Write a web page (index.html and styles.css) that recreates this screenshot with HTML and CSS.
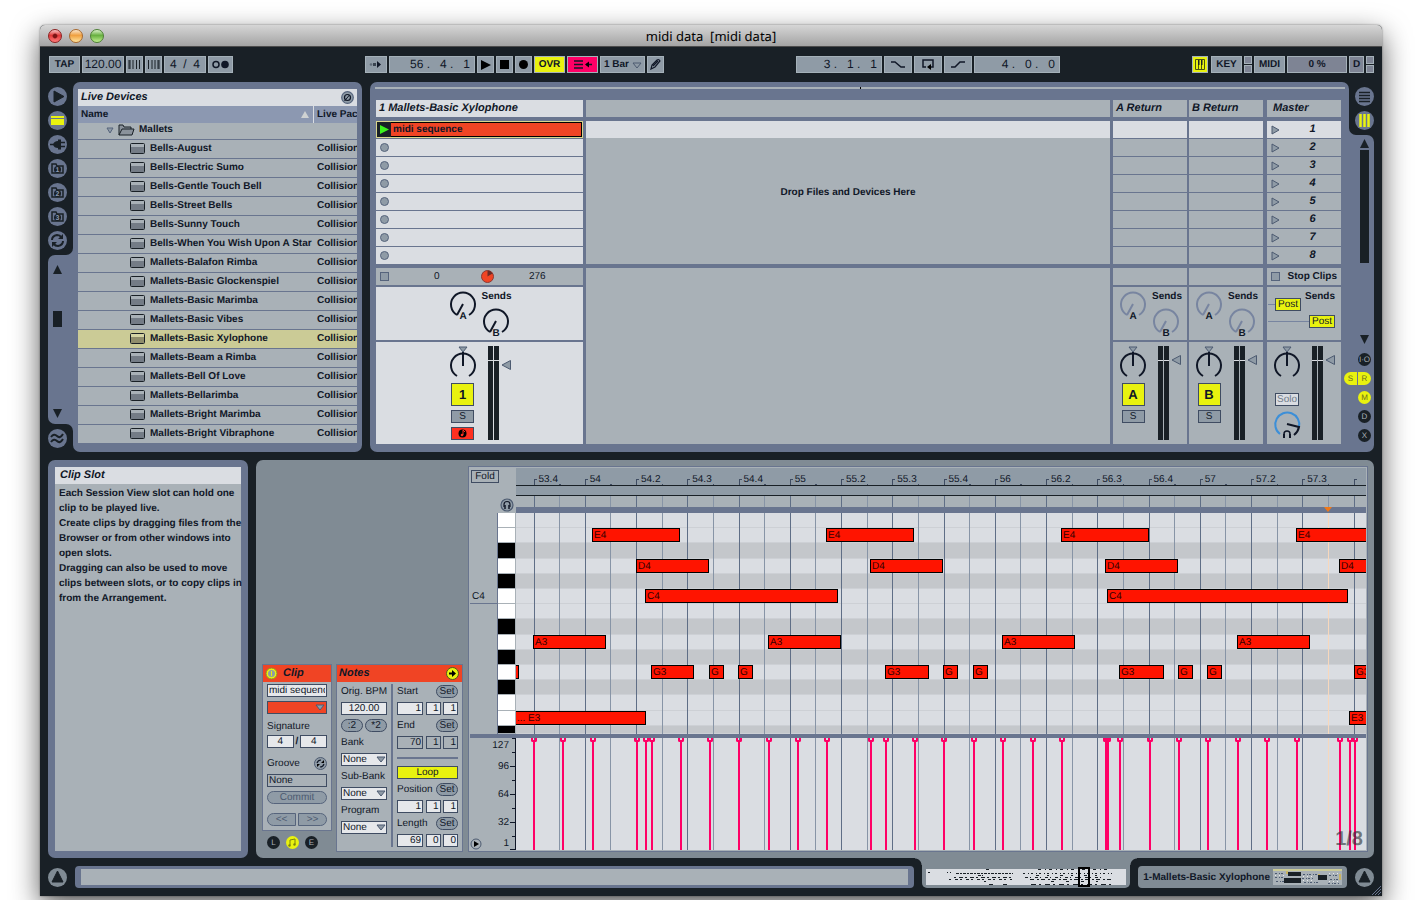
FILE: index.html
```html
<!DOCTYPE html>
<html lang="en">

<head>
    <meta charset="UTF-8" />
    <meta name="viewport" content="width=device-width, initial-scale=1.0" />
    <title>midi data [midi data]</title>
    <link rel="stylesheet" href="styles.css">
</head>

<body>
    <svg class="symbols" aria-hidden="true">
        <symbol id="i-down" viewBox="0 0 10 8"><path d="M1 1h8L5 6z" fill="#8f9ba6" stroke="#4c5a70" /></symbol>
        <symbol id="i-knob" viewBox="0 0 28 28"><path d="M8 25A12 12 0 1 1 20 25" /></symbol>
        <symbol id="i-needle" viewBox="0 0 28 28"><path d="M8 25A12 12 0 1 1 20 25M14 14L8 25" /></symbol>
        <symbol id="i-folder" viewBox="0 0 19 19"><path d="M4 5h4l1 2h6v7H4z" fill="none" stroke="#192026" stroke-width="1.5" /><circle cx="9.5" cy="10.5" r="3.5" fill="#192026" /></symbol>
        <symbol id="i-up" viewBox="0 0 19 19"><path d="M9.5 3L15 14H4z" fill="#192026" stroke="#192026" stroke-linejoin="round" /></symbol>
    </svg>

    <div class="window">
        <header class="titlebar">
            <div class="lights">
                <button class="light red" aria-label="Close"></button>
                <button class="light orange" aria-label="Minimize"></button>
                <button class="light green" aria-label="Zoom"></button>
            </div>
            <h1>midi data&nbsp; [midi data]</h1>
        </header>

        <div class="transport">
            <div class="group">
                <button class="w31">TAP</button>
                <button class="w42 num">120.00</button>
                <button class="w17" aria-label="Nudge down"><svg width="13" height="9"><path d="M1 0v9M2 0v9M5 0v9M8.5 0v9M11.5 0v9" stroke="#192026" /></svg></button>
                <button class="w17" aria-label="Nudge up"><svg width="13" height="9"><path d="M1.5 0v9M5 0v9M8 0v9M11 0v9M12 0v9" stroke="#192026" /></svg></button>
                <button class="w42 num">4 &nbsp;/ &nbsp;4</button>
                <button class="w25" aria-label="Metronome"><svg width="17" height="9"><circle cx="4" cy="4.5" r="3" fill="none" stroke="#101727" stroke-width="1.5" /><circle cx="13" cy="4.5" r="3.8" fill="#101727" /></svg></button>
            </div>
            <div class="group">
                <button class="w22" aria-label="Follow"><svg width="14" height="9"><circle cx="2" cy="4.5" r="1.3" fill="#5f6a77" /><path d="M4 3h3v3H4z" fill="#39434f" /><path d="M8 1l4 3.5L8 8z" fill="#101727" /></svg></button>
                <button class="w86 num right">56 . &nbsp; 4 . &nbsp; 1</button>
                <button class="w17" aria-label="Play"><svg width="11" height="12"><path d="M1 1l10 5L1 11z" /></svg></button>
                <button class="w17" aria-label="Stop"><svg width="9" height="9"><path d="M0 0h9v9H0z" /></svg></button>
                <button class="w17" aria-label="Record"><svg width="9" height="9"><circle cx="4.5" cy="4.5" r="4.5" /></svg></button>
                <button class="w31 yellow">OVR</button>
                <button class="w31 pink" aria-label="Back to arrangement"><svg width="18" height="9"><path d="M0 1h9M0 4.5h9M0 8h9M12 4.5h6" stroke="#101727" stroke-width="1.5" /><path d="M11 4.5l4-3v6z" /></svg></button>
                <button class="w45 left">1 Bar<svg width="10" height="8"><use href="#i-down" /></svg></button>
                <button class="w17" aria-label="Draw mode"><svg width="11" height="11"><path d="M1 10l1-4 5-5q2-1 3 1L5 8zM3 7l5-5" fill="#8f9ba6" stroke="#101727" stroke-width="1.2" /></svg></button>
            </div>
            <div class="group">
                <button class="w86 num right">3 . &nbsp; 1 . &nbsp; 1</button>
                <button class="w28" aria-label="Punch in"><svg width="16" height="8"><path d="M1 1h4l6 5h4" fill="none" stroke="#101727" stroke-width="1.5" /></svg></button>
                <button class="w28" aria-label="Loop switch"><svg width="14" height="11"><path d="M5 8H2V1h10v7H9" fill="none" stroke="#101727" stroke-width="1.5" /><path d="M6 8l4-3v6z" /></svg></button>
                <button class="w28" aria-label="Punch out"><svg width="16" height="8"><path d="M1 6h4l5-5h5" fill="none" stroke="#101727" stroke-width="1.5" /></svg></button>
                <button class="w86 num right">4 . &nbsp; 0 . &nbsp; 0</button>
            </div>
            <div class="group">
                <button class="w16 yellow" aria-label="Computer keyboard"><svg width="10" height="11"><path d="M.5 .5h9v10h-9zM3.5 6v4M6.5 6v4" fill="none" stroke="#4c5310" /><path d="M3 1h1.5v5H3zM6 1h1.5v5H6z" fill="#192026" /></svg></button>
                <button class="w31 key">KEY</button>
                <span class="leds"><i></i><i></i></span>
                <button class="w31">MIDI</button>
                <button class="w60 dim">0 %</button>
                <button class="w15 dim">D</button>
                <span class="leds"><i></i><i></i></span>
            </div>
        </div>

        <div class="upper">
            <section class="browser">
                <nav class="rail">
                    <div class="rail-top">
                        <button class="round" aria-label="Hide browser"><svg viewBox="0 0 19 19"><path d="M6 4l10 5.5L6 15z" fill="#192026" stroke="#192026" stroke-linejoin="round" /></svg></button>
                        <button class="round" aria-label="Live devices"><svg viewBox="0 0 19 19"><path d="M3 5h13v2H3zM3 8h13v6H3z" fill="#e9f20f" /></svg></button>
                        <button class="round" aria-label="Plug-ins"><svg viewBox="0 0 19 19"><path d="M2 9.5h4M13 7.5h4M13 11.5h4" stroke="#192026" stroke-width="1.5" /><path d="M5 9.5Q6 6 10 6V4.5h3v10h-3V13Q6 13 5 9.5z" fill="#192026" /></svg></button>
                        <button class="round" aria-label="File browser 1"><svg viewBox="0 0 19 19"><use href="#i-folder" /><text x="9.5" y="13">1</text></svg></button>
                        <button class="round" aria-label="File browser 2"><svg viewBox="0 0 19 19"><use href="#i-folder" /><text x="9.5" y="13">2</text></svg></button>
                        <button class="round" aria-label="File browser 3"><svg viewBox="0 0 19 19"><use href="#i-folder" /><text x="9.5" y="13">3</text></svg></button>
                        <button class="round" aria-label="Hot-swap"><svg viewBox="0 0 19 19"><path d="M4 9Q4 5 9 4q3 0 4 2M15 10q0 4-5 5-3 0-4-2" fill="none" stroke="#192026" stroke-width="2" /><path d="M15 3v5h-5zM4 16v-5h5z" fill="#192026" /></svg></button>
                    </div>
                    <div class="rail-scroll">
                        <svg width="9" height="9"><path d="M4.5 0L9 9H0z" /></svg>
                        <div class="thumb"></div>
                        <svg width="9" height="9"><path d="M4.5 9L9 0H0z" /></svg>
                    </div>
                    <div class="rail-bottom">
                        <button class="round" aria-label="Groove pool"><svg viewBox="0 0 19 19"><path d="M3 8q3-4 6-1t6-2M3 13q3-4 6-1t6-2" fill="none" stroke="#192026" stroke-width="2" /></svg></button>
                    </div>
                </nav>
                <div class="panel devices">
                    <div class="panel-title">
                        <h2>Live Devices</h2>
                        <button class="search" aria-label="Search"><svg width="13" height="13"><circle cx="6.5" cy="6.5" r="5.8" fill="#8f9ba6" stroke="#56647c" stroke-width="1.2" /><circle cx="6.5" cy="6.5" r="3" fill="none" stroke="#101727" stroke-width="1.2" /><path d="M3.5 10l5-6" stroke="#101727" /></svg></button>
                    </div>
                    <table>
                        <thead>
                            <tr>
                                <th class="name"><span>Name<svg width="8" height="7"><path d="M4 0l4 7H0z" fill="#cfd2d2" /></svg></span></th>
                                <th>Live Pac</th>
                            </tr>
                        </thead>
                        <tbody id="devices"></tbody>
                    </table>
                </div>
            </section>

            <section class="session">
                <div class="panel tracks">
                    <div class="overview"><i></i></div>
                    <div class="columns">
                        <div class="track midi">
                            <h2>1 Mallets-Basic Xylophone</h2>
                            <div class="slots">
                                <button class="slot clip"><span class="launch"><svg width="9" height="9"><path d="M0 0l9 4.5L0 9z" fill="#3cf01e" /></svg></span>midi sequence</button>
                                <button class="slot" aria-label="Stop slot 2"><i></i></button>
                                <button class="slot" aria-label="Stop slot 3"><i></i></button>
                                <button class="slot" aria-label="Stop slot 4"><i></i></button>
                                <button class="slot" aria-label="Stop slot 5"><i></i></button>
                                <button class="slot" aria-label="Stop slot 6"><i></i></button>
                                <button class="slot" aria-label="Stop slot 7"><i></i></button>
                                <button class="slot" aria-label="Stop slot 8"><i></i></button>
                            </div>
                            <div class="stop status">
                                <button class="square" aria-label="Stop clip"></button>
                                <span class="count">0</span>
                                <svg width="13" height="13"><circle cx="6.5" cy="6.5" r="6" fill="#f04424" stroke="#8a3a34" /><path d="M6.5 6.5V.5a6 6 0 0 1 5 3z" fill="#6b2a26" /></svg>
                                <span class="count">276</span>
                            </div>
                            <div class="sends">
                                <div class="strip">
                                    <svg class="knob" width="28" height="34"><use href="#i-needle" width="28" height="28" /><text x="14" y="29">A</text></svg>
                                    <div class="send-b"><b>Sends</b><svg class="knob" width="28" height="34"><use href="#i-needle" width="28" height="28" /><text x="14" y="29">B</text></svg></div>
                                </div>
                            </div>
                            <div class="mixer">
                                <div class="strip">
                                    <div class="buttons">
                                        <svg class="knob pan" width="28" height="34"><path d="M10 1h8l-4 5z" class="mark" /><path d="M14 6v14" /><use href="#i-knob" y="5" width="28" height="28" /></svg>
                                        <button class="activator">1</button>
                                        <button class="small">S</button>
                                        <button class="small arm" aria-label="Arm"><svg width="9" height="9"><circle cx="4.5" cy="4.5" r="4" /><path d="M5 1v5M5 1l2 2" stroke="#ff3020" /><circle cx="4" cy="6" r="1.3" fill="#ff3020" /></svg></button>
                                    </div>
                                    <div class="meter"><i></i><i></i></div>
                                    <svg class="fader low" width="10" height="10"><path d="M9.5 .5v9L1 5z" class="mark" /></svg>
                                </div>
                            </div>
                        </div>

                        <div class="track drop">
                            <h2></h2>
                            <div class="slots">
                                <div class="slot"></div>
                                <p>Drop Files and Devices Here</p>
                            </div>
                            <div class="blank"></div>
                        </div>

                        <div class="returns" id="returns"></div>

                        <div class="track master">
                            <h2>Master</h2>
                            <div class="slots" id="scenes"></div>
                            <div class="stop"><button class="square" aria-label="Stop all"></button><b>Stop Clips</b></div>
                            <div class="sends posts">
                                <b>Sends</b>
                                <div><button class="post">Post</button></div>
                                <div><button class="post">Post</button></div>
                            </div>
                            <div class="mixer">
                                <div class="strip">
                                    <div class="buttons">
                                        <svg class="knob pan" width="28" height="34"><path d="M10 1h8l-4 5z" class="mark" /><path d="M14 6v14" /><use href="#i-knob" y="5" width="28" height="28" /></svg>
                                        <button class="solo">Solo</button>
                                        <svg class="knob" width="28" height="28"><path d="M7 23A12 12 0 1 1 26 16" stroke="#3c8fd8" /><path d="M14 13l12 3q-1 5-5 8" /><path d="M11 25v-2a3 3 0 0 1 6 0v2" stroke-width="1.5" /><path d="M11 23v4M17 23v4" /></svg>
                                    </div>
                                    <div class="meter"><i></i><i></i></div>
                                    <svg class="fader" width="10" height="10"><path d="M9.5 .5v9L1 5z" class="mark" /></svg>
                                </div>
                            </div>
                        </div>
                    </div>
                </div>
                <nav class="rail right">
                    <div class="rail-top">
                        <button class="round" aria-label="Arrangement view"><svg viewBox="0 0 19 19"><path d="M4 5.5h11M4 8.5h11M4 11.5h11M4 14.5h11" stroke="#192026" stroke-width="1.5" /></svg></button>
                        <button class="round" aria-label="Session view"><svg viewBox="0 0 19 19"><path d="M5.5 3v13M9.5 3v13M13.5 3v13" stroke="#e9f20f" stroke-width="2.5" /></svg></button>
                    </div>
                    <div class="rail-scroll">
                        <svg width="9" height="9"><path d="M4.5 0L9 9H0z" /></svg>
                        <div class="bar"></div>
                        <svg width="9" height="9"><path d="M4.5 9L9 0H0z" /></svg>
                        <div class="sections">
                            <button>I·O</button>
                            <div class="pair"><button class="on">S</button><button class="on">R</button></div>
                            <button class="on">M</button>
                            <button>D</button>
                            <button>X</button>
                        </div>
                    </div>
                </nav>
            </section>
        </div>

        <div class="lower">
            <aside class="panel info">
                <div class="panel-title"><h2>Clip Slot</h2></div>
                <div class="help">
                    <p>Each Session View slot can hold one<br>clip to be played live.</p>
                    <p>Create clips by dragging files from the<br>Browser or from other windows into<br>open slots.</p>
                    <p>Dragging can also be used to move<br>clips between slots, or to copy clips in<br>from the Arrangement.</p>
                </div>
            </aside>

            <section class="detail">
                <div class="clip-side">
                    <form class="box clip-box">
                        <div class="box-title"><svg width="13" height="13"><circle cx="6.5" cy="6.5" r="5.5" fill="#e9f20f" stroke="#8a8a30" /><circle cx="6.5" cy="6.5" r="3.5" fill="#8f9ba6" /><path d="M6.5 4v5" stroke="#e9f20f" /></svg><h2>Clip</h2></div>
                        <div class="fields">
                            <input type="text" value="midi sequence" aria-label="Clip name">
                            <button type="button" class="color" aria-label="Clip color"><svg width="10" height="8"><use href="#i-down" /></svg></button>
                            <label class="text" for="sig">Signature</label>
                            <div class="row"><input class="mid" type="text" id="sig" value="4"><b>/</b><input class="mid" type="text" value="4" aria-label="Denominator"></div>
                            <div class="row groove"><label for="groove">Groove</label><svg width="13" height="13"><circle cx="6.5" cy="6.5" r="6" fill="#8f9ba6" stroke="#4c5a70" /><path d="M3 6q1-3 4-3M10 7q-1 3-4 3" fill="none" stroke="#101727" stroke-width="1.2" /><path d="M10 3v3H7zM3 10V7h3z" /></svg></div>
                            <input class="gray" type="text" id="groove" value="None">
                            <button type="button" class="pill faint">Commit</button>
                            <div class="row nudge"><button type="button" class="pill faint">&lt;&lt;</button><button type="button" class="pill faint">&gt;&gt;</button></div>
                        </div>
                    </form>
                    <div class="tabs">
                        <button>L</button>
                        <button class="on" aria-label="Notes box"><svg width="9" height="9"><path d="M2 7V2l5-1v5" fill="none" stroke="#7c8210" /><circle cx="1.5" cy="7.5" r="1.2" fill="#7c8210" /><circle cx="6.5" cy="6.5" r="1.2" fill="#7c8210" /></svg></button>
                        <button>E</button>
                    </div>
                </div>

                <form class="box notes-box">
                    <div class="box-title"><h2>Notes</h2><svg width="13" height="13"><circle cx="6.5" cy="6.5" r="6" fill="#e9f20f" stroke="#4c5a20" /><path d="M3 5.5h3V3l4 3.5L6 10V7.5H3z" /></svg></div>
                    <div class="notes-cols">
                        <div class="fields">
                            <label for="bpm">Orig. BPM</label>
                            <input class="mid" type="text" id="bpm" value="120.00">
                            <div class="row"><button type="button" class="pill">:2</button><button type="button" class="pill">*2</button></div>
                            <label for="bank">Bank</label>
                            <div class="pick"><select id="bank"><option>None</option></select><svg width="10" height="8"><use href="#i-down" /></svg></div>
                            <label for="subbank">Sub-Bank</label>
                            <div class="pick"><select id="subbank"><option>None</option></select><svg width="10" height="8"><use href="#i-down" /></svg></div>
                            <label for="program">Program</label>
                            <div class="pick"><select id="program"><option>None</option></select><svg width="10" height="8"><use href="#i-down" /></svg></div>
                        </div>
                        <div class="fields">
                            <div class="row"><label for="start">Start</label><button type="button" class="pill set">Set</button></div>
                            <div class="row pos"><input type="text" id="start" value="1"><input type="text" value="1" aria-label="Start beat"><input type="text" value="1" aria-label="Start sixteenth"></div>
                            <div class="row"><label for="end">End</label><button type="button" class="pill set">Set</button></div>
                            <div class="row pos"><input class="gray" type="text" id="end" value="70"><input class="gray" type="text" value="1" aria-label="End beat"><input class="gray" type="text" value="1" aria-label="End sixteenth"></div>
                            <hr>
                            <button type="button" class="loop">Loop</button>
                            <div class="row"><label for="position">Position</label><button type="button" class="pill set">Set</button></div>
                            <div class="row pos"><input type="text" id="position" value="1"><input type="text" value="1" aria-label="Position beat"><input type="text" value="1" aria-label="Position sixteenth"></div>
                            <div class="row"><label for="length">Length</label><button type="button" class="pill set">Set</button></div>
                            <div class="row pos"><input type="text" id="length" value="69"><input type="text" value="0" aria-label="Length beats"><input type="text" value="0" aria-label="Length sixteenths"></div>
                        </div>
                    </div>
                </form>

                <div class="editor">
                    <div class="corner">
                        <button class="fold">Fold</button>
                        <svg width="14" height="14"><circle cx="7" cy="7" r="6" fill="#8f9ba6" stroke="#4c5a70" stroke-width="1.2" /><path d="M4 9V6.5a3 3 0 0 1 6 0V9" fill="none" stroke="#101727" stroke-width="1.2" /><path d="M5 7v4M9 7v4" stroke="#101727" stroke-width="1.5" /></svg>
                    </div>
                    <div class="rulers">
                        <div class="ruler" id="ruler"></div>
                        <div class="loop-lane"></div>
                        <div class="scrub grid-area"></div>
                        <div class="strip-bar"><svg class="playmark" width="8" height="5"><path d="M0 0h8L4 5z" fill="#f07818" /></svg></div>
                    </div>
                    <div class="octaves">
                        <span class="octave">C4</span>
                        <div class="keys" id="keys"></div>
                    </div>
                    <div class="roll grid-area" id="roll"></div>
                    <div class="divider"></div>
                    <div class="scale">
                        <button class="preview" aria-label="Show velocity lane"><svg width="12" height="12"><circle cx="6" cy="6" r="5" fill="none" stroke="#4c5a70" /><path d="M4 3l5 3-5 3z" /></svg></button>
                        <div class="levels"><span>127</span><span>96</span><span>64</span><span>32</span><span>1</span></div>
                    </div>
                    <div class="velocity grid-area" id="velocity"><span class="quantize">1/8</span></div>
                </div>
            </section>
        </div>

        <footer>
            <button class="round gray" aria-label="Hide info view"><svg viewBox="0 0 19 19"><use href="#i-up" /></svg></button>
            <div class="message"></div>
            <div class="clip-tab">
                <svg viewBox="0 0 200 16" preserveAspectRatio="none" id="mini"></svg>
                <i></i>
            </div>
            <div class="device-tab">
                <b>1-Mallets-Basic Xylophone</b>
                <svg width="69" height="16" id="chain"></svg>
            </div>
            <button class="round gray" aria-label="Hide detail view"><svg viewBox="0 0 19 19"><use href="#i-up" /></svg></button>
            <svg class="grip" width="9" height="9"><path d="M0 9l9-9M3 9l6-6M6 9l3-3" stroke="#69758f" /></svg>
        </footer>
    </div>

    <script src="script.js"></script>
</body>

</html>
```

FILE: styles.css
```css
body {
    margin: 0;
    padding: 25px 40px 4px;
    min-height: 100vh;
    box-sizing: border-box;
    display: flex;
    background: #fff;
    font: 10px/13px "Liberation Sans", Arial, sans-serif;
    color: #101727;
    text-rendering: geometricPrecision;
    overflow: hidden;
}

h1,
h2,
p {
    margin: 0;
}

h2 {
    font: italic bold 11px/17px "Liberation Sans", Arial, sans-serif;
    white-space: nowrap;
}

button,
input,
select {
    box-sizing: border-box;
    margin: 0;
    padding: 0;
    border: 0;
    border-radius: 0;
    background: none;
    font: inherit;
    color: inherit;
    text-rendering: inherit;
}

svg {
    display: block;
    flex: none;
}

.symbols {
    position: absolute;
    width: 0;
    height: 0;
}

.window {
    flex: 1;
    min-width: 0;
    display: flex;
    flex-direction: column;
    background: #192026;
    border-radius: 5px 5px 0 0;
    box-shadow: 0 10px 28px rgba(0, 0, 0, 0.65), 0 0 2px rgba(0, 0, 0, 0.5);
}

/* title bar */
.titlebar {
    display: grid;
    grid-template-columns: 1fr auto 1fr;
    align-items: center;
    height: 21px;
    border-bottom: 1px solid #4c4c4c;
    border-radius: 5px 5px 0 0;
    background: linear-gradient(#d6d6d6, #a4a4a4);
}

.titlebar h1 {
    font: 13px/20px "Noto Sans", sans-serif;
    color: #000;
}

.lights {
    display: flex;
    gap: 7px;
    padding-left: 8px;
}

.light {
    width: 14px;
    height: 14px;
    border-radius: 50%;
    border: 1px solid #7a6a5a;
}

.light.red {
    border-color: #8c2020;
    background: radial-gradient(circle at 50% 50%, #7c1414 20%, transparent 35%), linear-gradient(#f6c4c4, #e03838 45%, #ff7c7c);
}

.light.orange {
    border-color: #a8682c;
    background: linear-gradient(#fbe6cc, #f0a040 45%, #ffe49c);
}

.light.green {
    border-color: #4c8034;
    background: linear-gradient(#dcf2cc, #68b040 45%, #c0f090);
}

/* transport */
.transport {
    display: flex;
    justify-content: space-between;
    padding: 9px 8px 9px 9px;
}

.group {
    display: flex;
    gap: 2px;
}

.group button {
    height: 17px;
    display: flex;
    align-items: center;
    justify-content: center;
    border: 1px solid #a5b1b9;
    background: #8f9ba6;
    font-weight: bold;
    white-space: nowrap;
}

.group .num {
    font-size: 12px;
    font-weight: normal;
}

.group .right {
    justify-content: flex-end;
    padding-right: 4px;
}

.group .left {
    justify-content: space-between;
    padding: 0 2px 0 3px;
}

.group .left svg {
    margin-top: 3px;
}

.group .yellow {
    background: #e9f20f;
}

.group .pink {
    background: #ff0066;
}

.group .dim {
    background: #7e8494;
}

.group .key {
    margin-left: 1px;
}

.w15 { width: 15px; }
.w16 { width: 16px; }
.w17 { width: 17px; }
.w22 { width: 22px; }
.w25 { width: 25px; }
.w28 { width: 28px; }
.w31 { width: 31px; }
.w42 { width: 42px; }
.w45 { width: 45px; }
.w60 { width: 60px; }
.w86 { width: 86px; }

.leds {
    display: flex;
    flex-direction: column;
    gap: 1px;
}

.leds i {
    flex: 1;
    width: 6px;
    border: 1px solid #a5b1b9;
    background: #7e8494;
}

/* upper half */
.upper {
    display: flex;
    gap: 8px;
    padding: 0 8px;
}

.browser,
.session {
    display: flex;
}

.session {
    flex: 1;
    min-width: 0;
}

.panel {
    background: #69758f;
    border-radius: 7px;
}

.rail {
    width: 25px;
    display: flex;
    flex-direction: column;
    background: linear-gradient(to right, #192026 50%, #69758f 50%);
}

.rail.right {
    background: linear-gradient(to left, #192026 50%, #69758f 50%);
}

.rail-top,
.rail-bottom {
    display: flex;
    flex-direction: column;
    gap: 5px;
    padding: 5px 0;
    background: #192026;
}

.rail-top {
    border-radius: 0 0 7px 0;
}

.rail-bottom {
    border-radius: 0 7px 0 0;
    padding-bottom: 4px;
}

.rail.right .rail-top {
    align-items: flex-end;
    border-radius: 0 0 0 7px;
}

.round {
    width: 19px;
    height: 19px;
    border-radius: 50%;
    background: #69758f;
}

.round.gray {
    background: #808b94;
}

.round text {
    font: bold 7px "Liberation Sans", sans-serif;
    fill: #8c98b1;
    text-anchor: middle;
}

.rail-scroll {
    flex: 1;
    box-sizing: border-box;
    display: flex;
    flex-direction: column;
    justify-content: space-between;
    padding: 10px 4px 6px 5px;
    border-radius: 7px 0 0 7px;
    background: #69758f;
    fill: #192026;
}

.thumb {
    width: 9px;
    height: 16px;
    margin-bottom: 46px;
    background: #192026;
}

.rail.right .rail-scroll {
    justify-content: flex-start;
    align-items: flex-end;
    padding: 4px 5px 10px 0;
    border-radius: 0 7px 7px 0;
}

.rail.right .bar {
    width: 9px;
    height: 113px;
    margin: 2px 0 72px;
    background: #192026;
}

.sections {
    display: flex;
    flex-direction: column;
    align-items: flex-end;
    gap: 6px;
    margin: 9px -2px 0 -8px;
}

.sections button,
.tabs button {
    width: 13px;
    height: 13px;
    display: flex;
    align-items: center;
    justify-content: center;
    border-radius: 50%;
    background: #192026;
    color: #a9b1b7;
    font-size: 8px;
    line-height: 13px;
}

.sections button.on,
.tabs button.on {
    background: #e9f20f;
    color: #6b7020;
}

.pair {
    display: flex;
    gap: 1px;
}

.pair .on:first-child {
    border-radius: 7px 0 0 7px;
}

.pair .on:last-child {
    border-radius: 0 7px 7px 0;
}

/* device browser */
.devices {
    width: 279px;
    padding: 7px 5px 8px;
}

.panel-title {
    display: flex;
    align-items: center;
    justify-content: space-between;
    height: 17px;
    padding: 0 3px;
    background: #dadde2;
}

table {
    width: 100%;
    table-layout: fixed;
    border-spacing: 0;
    background: #a9b1b7;
    font-weight: bold;
}

th,
td {
    height: 18px;
    padding: 0;
    border-bottom: 1px solid #69758f;
    overflow: hidden;
    text-align: left;
    white-space: nowrap;
}

td {
    padding-left: 3px;
    line-height: 12px;
}

th {
    height: 17px;
    padding-left: 3px;
    border: 0;
    background: #8c98b1;
}

th.name {
    width: 232px;
    border-right: 1px solid #dadde2;
}

th span {
    display: flex;
    align-items: center;
    justify-content: space-between;
    padding-right: 4px;
}

td:first-child {
    padding-left: 52px;
}

td span {
    display: flex;
    align-items: center;
    gap: 5px;
}

tr.folder td {
    height: 16px;
    padding: 0;
}

tr.folder span {
    gap: 4px;
    height: 14px;
    padding: 0 0 2px 28px;
}

tr.selected td {
    background: #cbcb96;
}

/* session view */
.tracks {
    flex: 1;
    min-width: 0;
    padding: 5px 8px 8px 6px;
    border-radius: 7px 7px 0 7px;
}

.overview {
    height: 2px;
    margin: 0 -4px 11px -1px;
    background: #a9b1b7;
}

.overview i {
    display: block;
    width: 1px;
    height: 2px;
    margin-left: 50%;
    background: #000;
}

.columns {
    display: flex;
    gap: 3px;
}

.track {
    width: 74px;
    display: flex;
    flex-direction: column;
}

.track.midi {
    width: 207px;
}

.track.drop {
    flex: 1;
}

.returns {
    display: flex;
    gap: 2px;
    padding-right: 1px;
}

.track h2 {
    height: 17px;
    padding-left: 3px;
    background: #a9b1b7;
}

.master h2 {
    padding-left: 6px;
}

.slots {
    display: flex;
    flex-direction: column;
    gap: 1px;
    height: 143px;
    margin: 4px 0;
}

.slot {
    height: 17px;
    display: flex;
    align-items: center;
    padding-left: 4px;
    background: #a9b1b7;
}

.slot:first-child {
    background: #dadde2;
}

.slot i {
    width: 7px;
    height: 7px;
    border: 1px solid #56647c;
    border-radius: 50%;
    background: #8f9ba6;
}

.midi h2,
.midi .slot,
.midi .sends,
.midi .mixer {
    background: #dadde2;
}

.midi .slot.clip {
    padding: 0;
    border: 1px solid #000;
    outline: 1px solid #d8d48c;
    outline-offset: -1px;
    background: #f04424;
    font-weight: bold;
    box-shadow: inset 0 0 0 1px #000;
    gap: 2px;
}

.launch {
    align-self: stretch;
    width: 14px;
    display: flex;
    align-items: center;
    justify-content: center;
    background: #192026;
}

.drop .slots {
    gap: 0;
}

.drop p {
    flex: 1;
    display: flex;
    justify-content: center;
    padding-top: 48px;
    background: #a9b1b7;
    font-weight: bold;
}

.blank {
    flex: 1;
    background: #a9b1b7;
}

.scene {
    font: italic bold 11px/17px "Liberation Sans", Arial, sans-serif;
}

.scene span {
    flex: 1;
    padding-left: 4px;
    text-align: center;
}

.stop {
    display: flex;
    align-items: center;
    height: 17px;
    padding: 0 4px;
    background: #a9b1b7;
}

.stop b {
    margin-left: 8px;
    white-space: nowrap;
}

.square {
    width: 9px;
    height: 9px;
    border: 1px solid #56647c;
    background: #8f9ba6;
}

.count {
    flex: 1;
    text-align: center;
}

.status .square {
    margin-right: 4px;
}

.status {
    padding-right: 2px;
}

.sends,
.mixer {
    display: flex;
    justify-content: center;
    background: #a9b1b7;
}

.sends {
    height: 53px;
    margin: 2px 0;
}

.mixer {
    height: 102px;
}

.strip {
    width: 74px;
    display: flex;
    box-sizing: border-box;
}

.sends .strip {
    gap: 5px;
    padding: 3px 0 0 6px;
}

.send-b b {
    display: block;
    height: 17px;
}

.knob {
    overflow: visible;
    fill: none;
    stroke: #101727;
    stroke-width: 2;
}

.knob.off {
    stroke: #7885a0;
}

.knob text {
    font: bold 10px "Liberation Sans", sans-serif;
    fill: #101727;
    stroke: none;
    text-anchor: middle;
}

.mark {
    fill: #8f9ba6;
    stroke: #4c5a70;
    stroke-width: 1;
}

.mixer .strip {
    padding: 4px 0 0 6px;
}

.buttons {
    width: 28px;
    display: flex;
    flex-direction: column;
    align-items: center;
    gap: 4px;
}

.buttons .pan {
    margin-bottom: -1px;
}

.activator,
.small,
.solo,
.post {
    width: 23px;
    border: 1px solid #3f4c62;
    background: #e9f20f;
}

.activator {
    height: 23px;
    font-size: 13px;
    font-weight: bold;
}

.small,
.solo {
    height: 13px;
    line-height: 11px;
    background: #8f9ba6;
}

.small.arm {
    display: flex;
    align-items: center;
    justify-content: center;
    background: #ff3020;
}

.solo {
    width: 24px;
    margin: 10px 0 1px;
    background: #dadde2;
    color: #6f7a88;
}

.meter {
    display: flex;
    gap: 1px;
    height: 94px;
    margin: 0 2px 0 11px;
}

.meter i {
    width: 5px;
    background: linear-gradient(#192026 14px, #dadde2 14px, #dadde2 15px, #192026 15px);
}

.fader {
    margin-top: 9px;
}

.fader.low {
    margin-top: 14px;
}

.posts {
    flex-direction: column;
    justify-content: flex-start;
    box-sizing: border-box;
    padding: 3px 6px 0 1px;
}

.posts b {
    height: 8px;
    text-align: right;
}

.posts div {
    height: 13px;
    display: flex;
    margin-bottom: 4px;
    background: linear-gradient(#7885a0, #7885a0) 0 6px / 100% 1px no-repeat;
}

.posts div:nth-child(2) {
    width: 33px;
}

.post {
    width: 26px;
    height: 13px;
    margin-left: auto;
    line-height: 11px;
}

/* lower half */
.lower {
    flex: 1;
    display: flex;
    gap: 8px;
    padding: 8px 8px 0;
}

.info {
    width: 186px;
    display: flex;
    flex-direction: column;
    padding: 7px;
}

.info .panel-title {
    padding: 0 5px;
}

.help {
    flex: 1;
    padding: 2px 0 0 4px;
    background: #a9b1b7;
    font-weight: bold;
    line-height: 15px;
    white-space: nowrap;
}

.detail {
    flex: 1;
    min-width: 0;
    display: flex;
    align-items: flex-end;
    box-sizing: border-box;
    padding: 6px;
    border-radius: 7px;
    background: #808b94;
}

.box {
    box-sizing: border-box;
    border: 1px solid #69758f;
    background: #a9b1b7;
}

.box-title {
    display: flex;
    align-items: center;
    gap: 5px;
    height: 17px;
    padding: 0 3px 0 2px;
    background: #f04424;
}

.clip-side {
    width: 70px;
    margin-right: 4px;
}

.clip-box {
    height: 167px;
}

.fields {
    display: flex;
    flex-direction: column;
    gap: 4px;
    white-space: nowrap;
}

.fields input,
.fields select,
.color,
.loop {
    width: 100%;
    height: 13px;
    min-width: 0;
    padding: 0 1px;
    border: 1px solid #3f4c62;
    background: #e6e8eb;
    line-height: 11px;
}

.fields label {
    height: 13px;
}

.fields input.gray {
    background: #a9b1b7;
}

.fields input.mid {
    text-align: center;
}

.clip-box .fields {
    padding: 2px 4px 0;
}

.fields .color {
    display: flex;
    align-items: center;
    justify-content: flex-end;
    background: #f04424;
}

.fields label.text {
    box-sizing: border-box;
    padding-top: 2px;
}

.row {
    display: flex;
    justify-content: space-between;
    gap: 2px;
}

.groove {
    align-items: center;
    padding: 5px 0 0;
}

.nudge {
    margin-top: 5px;
}

.pill {
    width: 100%;
    height: 13px;
    border: 1px solid #3f4c62;
    border-radius: 7px;
    background: #8f9ba6;
    line-height: 11px;
}

.pill.faint {
    border-color: #56647c;
    color: #4c5a70;
}

.pill.set {
    width: 22px;
}

.nudge .pill:first-child {
    border-radius: 7px 0 0 7px;
}

.nudge .pill:last-child {
    border-radius: 0 7px 7px 0;
}

.tabs {
    display: flex;
    gap: 6px;
    padding: 5px 5px 3px;
}

.notes-box {
    width: 127px;
    height: 188px;
    margin-right: 5px;
}

.notes-box .box-title {
    justify-content: space-between;
}

.notes-cols {
    display: grid;
    grid-template-columns: 46px 61px;
    gap: 10px;
    padding: 3px 4px 0;
    background: linear-gradient(#69758f, #69758f) 54px 2px / 2px 163px no-repeat;
}

.pick {
    display: grid;
    align-items: center;
}

.pick > * {
    grid-area: 1 / 1;
}

.pick select {
    appearance: none;
}

.pick svg {
    justify-self: end;
    margin-right: 1px;
    pointer-events: none;
}

.pos input {
    width: 15px;
    text-align: right;
}

.pos input:first-child {
    width: 26px;
}

hr {
    width: 100%;
    height: 2px;
    margin: 4px 0 3px;
    border: 0;
    background: #69758f;
}

.fields .loop {
    background: #e9f20f;
}

/* piano roll */
.editor {
    flex: 1;
    min-width: 0;
    align-self: stretch;
    display: grid;
    grid-template: 45px 1fr 4px 112px / 46px minmax(0, 1fr);
    box-sizing: border-box;
    padding: 1px;
    border: 1px solid #69758f;
    background: #a9b1b7;
}

.corner {
    display: flex;
    flex-direction: column;
    justify-content: space-between;
    padding: 2px 2px 1px 1px;
}

.corner svg {
    align-self: flex-end;
}

.fold {
    width: 28px;
    height: 13px;
    border: 1px solid #3f4c62;
    line-height: 11px;
}

.rulers {
    display: flex;
    flex-direction: column;
}

.ruler {
    position: relative;
    height: 17px;
    border-bottom: 1px solid #192026;
    background: #8f9ba6;
    overflow: hidden;
}

.ruler span {
    position: absolute;
    bottom: 0;
    height: 6px;
    padding-left: 4px;
    border-left: 1px solid #3f4c62;
    line-height: 1px;
    background: linear-gradient(#3f4c62, #3f4c62) 0 0 / 2px 1px no-repeat;
}

.ruler span.half {
    height: 1px;
    padding: 0;
}

.loop-lane {
    height: 9px;
    border-bottom: 1px solid #192026;
    background: #8f9ba6;
}

.scrub {
    height: 11px;
}

.strip-bar {
    position: relative;
    flex: 1;
    background: #69758f;
}

.playmark {
    position: absolute;
    left: 95.5%;
    margin-left: -4px;
}

.grid-area {
    position: relative;
    overflow: hidden;
}

.line {
    position: absolute;
    z-index: 1;
    top: 0;
    bottom: 0;
    width: 1px;
    background: #5f6e86;
}

.line.half {
    background: #8794a6;
}

.line.play {
    background: #f8d8bc;
}

.octaves {
    display: grid;
    grid-template-columns: 27px 18px;
}

.octave {
    height: 91px;
    display: flex;
    align-items: flex-end;
    padding-left: 2px;
    border-bottom: 1px solid #69758f;
    box-sizing: border-box;
    line-height: 12px;
}

.keys {
    display: flex;
    flex-direction: column;
    border-left: 1px solid #69758f;
}

.keys i {
    flex: 2;
    box-sizing: border-box;
    border-bottom: 1px solid #a9b1b7;
    background: #fff;
}

.keys i.sharp {
    background: #000;
}

.keys i:last-child,
.roll .lane:last-child {
    flex: 1;
}

.roll {
    display: flex;
    flex-direction: column;
    background: #dadde2;
}

.lane {
    position: relative;
    flex: 2;
    box-sizing: border-box;
    border-bottom: 1px solid #cdd0d5;
}

.lane.sharp {
    background: #c4c7cb;
}

.note {
    position: absolute;
    z-index: 2;
    top: 0;
    height: 14px;
    box-sizing: border-box;
    padding-left: 1px;
    border: 1px solid #000;
    background: #ff1400;
    color: #300;
    line-height: 13px;
    white-space: nowrap;
    overflow: hidden;
}

.divider {
    grid-column: 1 / 3;
    background: #69758f;
}

.scale {
    display: flex;
    justify-content: space-between;
    align-items: flex-end;
}

.levels {
    align-self: stretch;
    display: grid;
    grid-template-rows: 1fr 2fr 2fr 2fr 1fr;
    align-items: center;
    padding-right: 6px;
    border-right: 1px solid #101727;
    text-align: right;
    background: linear-gradient(#101727, #101727) 100% 0 / 3px 1px no-repeat,
        linear-gradient(#101727, #101727) 100% 14px / 3px 1px no-repeat,
        linear-gradient(#101727, #101727) 100% 28px / 5px 1px no-repeat,
        linear-gradient(#101727, #101727) 100% 42px / 3px 1px no-repeat,
        linear-gradient(#101727, #101727) 100% 56px / 5px 1px no-repeat,
        linear-gradient(#101727, #101727) 100% 70px / 3px 1px no-repeat,
        linear-gradient(#101727, #101727) 100% 84px / 5px 1px no-repeat,
        linear-gradient(#101727, #101727) 100% 98px / 3px 1px no-repeat,
        linear-gradient(#101727, #101727) 100% 111px / 5px 1px no-repeat;
}

.velocity {
    background: #dadde2;
}

.stem {
    position: absolute;
    z-index: 2;
    top: 3px;
    bottom: 0;
    width: 2px;
    background: #ff0066;
}

.stem::before {
    content: "";
    position: absolute;
    top: -3px;
    left: -2px;
    width: 2px;
    height: 2px;
    border: 2px solid #ff0066;
    border-top: 0;
    border-radius: 0 0 2px 2px;
}

.quantize {
    position: absolute;
    z-index: 2;
    right: 3px;
    bottom: 0;
    font-size: 20px;
    font-weight: bold;
    line-height: 22px;
    color: rgba(40, 46, 52, 0.6);
}

/* bottom bar */
footer {
    position: relative;
    display: flex;
    align-items: center;
    gap: 8px;
    height: 38px;
    padding: 0 8px;
}

.message {
    flex: 1;
    height: 16px;
    border: solid #69758f;
    border-width: 3px 6px;
    border-radius: 4px;
    background: #a9b1b7;
}

.clip-tab {
    position: relative;
    align-self: flex-start;
    width: 200px;
    padding: 11px 4px 3px;
    border-radius: 0 0 5px 5px;
    background: #808b94;
}

/* inverted corners where the tab meets the clip view */
.clip-tab::before,
.clip-tab::after {
    content: "";
    position: absolute;
    top: 0;
    width: 7px;
    height: 7px;
}

.clip-tab::before {
    right: 100%;
    background: radial-gradient(circle at 0 100%, #192026 6px, #808b94 7px);
}

.clip-tab::after {
    left: 100%;
    background: radial-gradient(circle at 100% 100%, #192026 6px, #808b94 7px);
}

.clip-tab svg {
    width: 100%;
    height: 16px;
    background: #dadde2;
}

.clip-tab i {
    position: absolute;
    left: 75%;
    top: 9px;
    width: 8px;
    height: 16px;
    border: 2px solid #000;
}

.device-tab {
    display: flex;
    align-items: center;
    gap: 3px;
    height: 22px;
    padding: 0 5px;
    border-radius: 4px;
    background: #808b94;
    white-space: nowrap;
}

.grip {
    position: absolute;
    right: 1px;
    bottom: 1px;
}
```

FILE: script.js
```js
const devices = [
    'Bells-August', 'Bells-Electric Sumo', 'Bells-Gentle Touch Bell', 'Bells-Street Bells',
    'Bells-Sunny Touch', 'Bells-When You Wish Upon A Star', 'Mallets-Balafon Rimba',
    'Mallets-Basic Glockenspiel', 'Mallets-Basic Marimba', 'Mallets-Basic Vibes',
    'Mallets-Basic Xylophone', 'Mallets-Beam a Rimba', 'Mallets-Bell Of Love',
    'Mallets-Bellarimba', 'Mallets-Bright Marimba', 'Mallets-Bright Vibraphone'
];

const folderRow = `<tr class="folder"><td colspan="2"><span>
    <svg width="8" height="7"><path d="M1 1h6L4 6z" fill="#8f9ba6" stroke="#56647c"/></svg>
    <svg width="17" height="12"><path d="M1 11V1h4l1 2h7v2M1 11L4 5h12l-2 6z" fill="#8a929b" stroke="#192026"/></svg>
    Mallets</span></td></tr>`;

document.getElementById('devices').innerHTML = folderRow + devices.map(name => {
    const selected = name === 'Mallets-Basic Xylophone';
    return `<tr class="${selected ? 'selected' : ''}"><td><span>
        <svg width="15" height="12"><rect x=".5" y=".5" width="14" height="10" rx="1" fill="${selected ? '#d4d4a4' : '#a9b1b7'}" stroke="#192026"/>
        <path d="M1 4h13v6H1z" fill="${selected ? '#8f8d6c' : '#747c86'}"/></svg>
        ${name}</span></td><td>Collision</td></tr>`;
}).join('');

let scenes = '';
for (let i = 1; i <= 8; i++) {
    scenes += `<button class="slot scene"><svg width="9" height="10"><path d="M1 1l7 4-7 4z" class="mark"/></svg><span>${i}</span></button>`;
}
document.getElementById('scenes').innerHTML = scenes;

// return tracks
const sendKnob = letter => `<svg class="knob off" width="28" height="34"><use href="#i-needle" width="28" height="28"/><text x="14" y="29">${letter}</text></svg>`;

document.getElementById('returns').innerHTML = ['A', 'B'].map(letter => `
    <div class="track">
        <h2>${letter} Return</h2>
        <div class="slots">${'<div class="slot"></div>'.repeat(8)}</div>
        <div class="stop"></div>
        <div class="sends"><div class="strip">${sendKnob('A')}<div class="send-b"><b>Sends</b>${sendKnob('B')}</div></div></div>
        <div class="mixer">
            <div class="strip">
                <div class="buttons">
                    <svg class="knob pan" width="28" height="34"><path d="M10 1h8l-4 5z" class="mark"/><path d="M14 6v14"/><use href="#i-knob" y="5" width="28" height="28"/></svg>
                    <button class="activator">${letter}</button>
                    <button class="small">S</button>
                </div>
                <div class="meter"><i></i><i></i></div>
                <svg class="fader" width="10" height="10"><path d="M9.5 .5v9L1 5z" class="mark"/></svg>
            </div>
        </div>
    </div>`).join('');

// time axis: the visible part of the clip is 850 units wide, one 16th is 51.25
const WIDTH = 850;
const STEP = 51.25;
const FIRST = 17.5;
const pct = value => (value / WIDTH * 100) + '%';

const labels = ['53.4', '54', '54.2', '54.3', '54.4', '55', '55.2', '55.3', '55.4',
    '56', '56.2', '56.3', '56.4', '57', '57.2', '57.3', ''];

let ruler = '';
let lines = '';
labels.forEach((label, i) => {
    const x = FIRST + i * STEP;
    ruler += `<span style="left:${pct(x)}">${label}</span>`;
    lines += `<div class="line" style="left:${pct(x)}"></div>`;
    if (i < labels.length - 1) {
        ruler += `<span class="half" style="left:${pct(x + STEP / 2)}"></span>`;
        lines += `<div class="line half" style="left:${pct(x + STEP / 2)}"></div>`;
    }
});
document.getElementById('ruler').innerHTML = ruler;
document.querySelector('.scrub').innerHTML = lines;

// every lane holds [start, end, label] notes
const lanes = [
    ['F4', []],
    ['E4', [[76, 164], [310, 398], [545, 633], [780, 880]]],
    ['D#4', []],
    ['D4', [[120, 193], [354, 427], [589, 662], [823, 880]]],
    ['C#4', []],
    ['C4', [[129, 322], [591, 832]]],
    ['B3', []],
    ['A#3', []],
    ['A3', [[17, 90], [252, 325], [486, 559], [721, 794]]],
    ['G#3', []],
    ['G3', [[-20, 3, ''], [135, 178], [193, 208, 'G'], [222, 237, 'G'], [369, 413], [427, 442, 'G'],
        [457, 472, 'G'], [603, 648], [662, 677, 'G'], [691, 706, 'G'], [838, 880]]],
    ['F#3', []],
    ['F3', []],
    ['E3', [[-1, 130, '... E3'], [833, 880]]],
    ['D#3', []]
];

const playLine = `<div class="line play" style="left:${pct(812)}"></div>`;
let keys = '';
let roll = '';
lanes.forEach(([key, notes]) => {
    const cls = key.includes('#') ? 'sharp' : '';
    keys += `<i class="${cls}"></i>`;
    roll += `<div class="lane ${cls}">` + notes.map(([from, to, text = key]) =>
        `<div class="note" style="left:${pct(from)};width:${pct(to - from)}">${text}</div>`).join('') + '</div>';
});
document.getElementById('keys').innerHTML = keys;
document.getElementById('roll').innerHTML = lines + playLine + roll;

const stems = [17, 46, 76, 120, 129, 135, 164, 193, 222, 252, 281, 310, 354, 369, 398, 427, 457, 486,
    516, 545, 589, 591, 603, 633, 662, 691, 721, 750, 780, 823, 833, 838];
document.getElementById('velocity').insertAdjacentHTML('afterbegin',
    lines + playLine + stems.map(x => `<div class="stem" style="left:${pct(x)}"></div>`).join(''));

// clip overview: [y, from, to, dash pattern]
const mini = [
    [0.5, 60, 64, '3 1'], [0.5, 112, 182, '3 4 1 3'], [3.5, 2, 4, '2 1'], [3.5, 21, 26, '1 2'],
    [4.5, 30, 87, '3 1 2 1'], [4.5, 97, 186, '2 3 1 2'], [6.5, 52, 57, '3 1'], [6.5, 110, 175, '3 8 2 11'],
    [8.5, 28, 86, '2 3 4 2'], [8.5, 99, 176, '3 2 1 4'], [10.5, 23, 86, '2 4 3 2'], [10.5, 104, 186, '4 3 2 2'],
    [12.5, 58, 61, '2 1'], [12.5, 125, 172, '3 12'], [15.5, 63, 81, '4 10'], [15.5, 105, 188, '5 3 2 4']
];
document.getElementById('mini').innerHTML = mini.map(([y, from, to, dash]) =>
    `<path d="M${from} ${y}H${to}" stroke="#192026" stroke-dasharray="${dash}"/>`).join('');

document.getElementById('chain').innerHTML = `<path d="M0 0h69v16H0z" fill="#a9b1b7"/>
    <path d="M0 1h69" stroke="#cbcb96" stroke-width="2"/>
    <path d="M2 4.5h10M2 8.5h9M3 12.5h8M30 5.5h14M29 9.5h12M31 13.5h14M56 6.5h10M57 10.5h8M55 14.5h12" stroke="#4c5a70" stroke-dasharray="2 2 1 1"/>
    <path d="M2 6.5h10M30 7.5h10M30 11.5h12M56 4.5h10M56 12.5h10" stroke="#e6e8eb" stroke-dasharray="1 3"/>
    <path d="M15 3h13v4H15zM11 9h17v5H11zM45 6h9v5h-9z" fill="#192026"/>
    <path d="M14 2v3M46 5v1M67 5v6" stroke="#e9b80f"/>`;
```
